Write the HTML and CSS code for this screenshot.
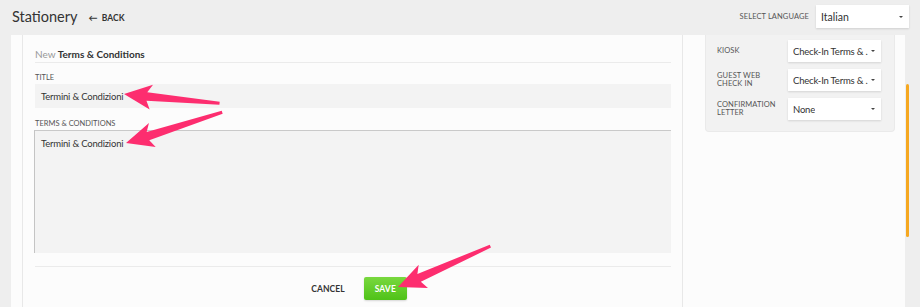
FILE: index.html
```html
<!DOCTYPE html>
<html lang="en">
<head>
<meta charset="utf-8">
<title>Stationery</title>
<link rel="stylesheet" href="styles.css">
</head>
<body>
<div class="page">
  <header class="topbar">
    <div class="title-group">
      <h1 class="page-title">Stationery</h1>
      <a class="back-link"><span class="back-arrow">&#8592;</span>BACK</a>
    </div>
    <div class="lang">
      <span class="lang-label">SELECT LANGUAGE</span>
      <div class="select lang-select"><span>Italian</span><span class="caret"></span></div>
    </div>
  </header>

  <div class="content">
    <section class="main-card">
      <div class="form-head"><span class="muted">New</span> Terms &amp; Conditions</div>
      <div class="field-label">TITLE</div>
      <div class="input">Termini &amp; Condizioni</div>
      <div class="field-label label-gap">TERMS &amp; CONDITIONS</div>
      <div class="textarea">Termini &amp; Condizioni</div>
      <div class="actions">
        <button class="btn-cancel">CANCEL</button>
        <button class="btn-save">SAVE</button>
      </div>
    </section>

    <aside class="side">
      <div class="panel">
        <div class="panel-row">
          <div class="row-label">KIOSK</div>
          <div class="select small-select"><span class="sel-text">Check-In Terms &amp; .</span><span class="caret"></span></div>
        </div>
        <div class="panel-row">
          <div class="row-label">GUEST WEB<br>CHECK IN</div>
          <div class="select small-select"><span class="sel-text">Check-In Terms &amp; .</span><span class="caret"></span></div>
        </div>
        <div class="panel-row">
          <div class="row-label">CONFIRMATION<br>LETTER</div>
          <div class="select small-select"><span class="sel-text">None</span><span class="caret"></span></div>
        </div>
      </div>
    </aside>
  </div>

  <div class="scroll-thumb"></div>

  <svg class="arrows" width="920" height="307" viewBox="0 0 920 307">
    <g fill="#fd2d6f">
      <polygon transform="translate(124,94) rotate(5.4)" points="0,0 28,-12 23,-4 96,-1.3 96,1.8 23,4.5 27,13"/>
      <polygon transform="translate(126,143) rotate(-17.9)" points="0,0 28,-12 23,-4 101,-1.3 101,1.8 23,4.5 27,13"/>
      <polygon transform="translate(398,287) rotate(-24)" points="0,0 28,-12 23,-4 101,-1.3 101,1.8 23,4.5 27,13"/>
    </g>
  </svg>
</div>
</body>
</html>
```

FILE: styles.css
```css
* { box-sizing: border-box; }

html, body {
  margin: 0;
  padding: 0;
}

body {
  background: #eeeeee;
  font-family: Lato, "Open Sans", sans-serif;
  color: #333;
  width: 920px;
  height: 307px;
  overflow: hidden;
}

.page {
  position: relative;
  width: 920px;
  height: 307px;
}

/* top bar */
.topbar {
  height: 35px;
  display: flex;
  align-items: center;
  justify-content: space-between;
  padding: 0 12px 0 12px;
}

.title-group {
  display: flex;
  align-items: center;
  gap: 11px;
}

.page-title {
  margin: 0;
  font-size: 14.5px;
  font-weight: 400;
  color: #333;
  line-height: 20px;
  position: relative;
  top: -1px;
}

.back-link {
  font-size: 8.5px;
  font-weight: 700;
  color: #333;
  display: flex;
  align-items: center;
  letter-spacing: 0.1px;
}

.back-arrow {
  font-size: 9px;
  margin-right: 4px;
}

.lang {
  display: flex;
  align-items: center;
  gap: 7px;
  margin-right: -1px;
  position: relative;
  top: -1px;
}

.lang-label {
  font-size: 7.5px;
  color: #555;
  letter-spacing: 0.1px;
}

.select {
  display: flex;
  align-items: center;
  justify-content: space-between;
  background: #fff;
  color: #333;
  box-shadow: 0 1px 2px rgba(0, 0, 0, 0.13);
  white-space: nowrap;
}

.sel-text {
  overflow: hidden;
}

.caret {
  flex: none;
  width: 0;
  height: 0;
  border-left: 2px solid transparent;
  border-right: 2px solid transparent;
  border-top: 2.5px solid #444;
}

.lang-select {
  width: 93px;
  height: 23px;
  padding: 0 6px 0 5px;
  font-size: 10.5px;
}

/* content */
.content {
  margin-left: 11px;
  width: 894px;
  height: 272px;
  background: #fcfcfc;
  display: flex;
}

.main-card {
  margin-left: 11px;
  width: 661px;
  border-left: 1px solid #e8e8e8;
  border-right: 1px solid #e8e8e8;
  padding: 0 11px 0 12px;
  display: flex;
  flex-direction: column;
}

.form-head {
  padding-top: 13px;
  padding-bottom: 2px;
  line-height: 12px;
  font-size: 10px;
  font-weight: 700;
  color: #333;
  border-bottom: 1px solid #ebebeb;
}

.muted {
  font-weight: 400;
  color: #999;
}

.field-label {
  font-size: 7.5px;
  color: #555;
  line-height: 10px;
  margin-top: 10px;
  margin-bottom: 1px;
}

.label-gap {
  margin-top: 11px;
}

.input {
  height: 24px;
  background: #f3f3f3;
  font-size: 9.5px;
  letter-spacing: -0.2px;
  display: flex;
  align-items: center;
  padding-left: 6px;
  color: #333;
}

.textarea {
  height: 123px;
  background: #f3f3f3;
  border-top: 1px solid #c9c9c9;
  border-left: 1px solid #c4c4c4;
  margin-left: -1px;
  font-size: 9.5px;
  letter-spacing: -0.2px;
  padding: 7px 6px;
  line-height: 12px;
  color: #333;
}

.actions {
  margin-top: 13px;
  border-top: 1px solid #ebebeb;
  display: flex;
  justify-content: center;
  align-items: center;
  gap: 19px;
  padding-top: 10px;
  padding-left: 12px;
}

.btn-cancel {
  border: 0;
  background: none;
  font-family: inherit;
  font-size: 8.5px;
  font-weight: 700;
  color: #333;
  padding: 0;
  letter-spacing: 0.1px;
}

.btn-save {
  border: 0;
  font-family: inherit;
  width: 43px;
  height: 23px;
  border-radius: 2px;
  background: linear-gradient(#79d83f, #4fc218);
  box-shadow: 0 1px 2px rgba(0, 0, 0, 0.15);
  color: #fff;
  font-size: 8.5px;
  font-weight: 700;
  padding: 0;
  letter-spacing: 0.1px;
}

/* side */
.side {
  flex: 1;
  padding: 0 10px 0 22px;
}

.panel {
  background: #f2f2f2;
  border: 1px solid #eaeaea;
  border-top: 0;
  border-radius: 0 0 4px 4px;
  padding: 5px 12px 11px 11px;
  display: flex;
  flex-direction: column;
  gap: 7px;
}

.panel-row {
  display: flex;
  align-items: center;
  height: 22px;
}

.row-label {
  width: 71px;
  font-size: 7.5px;
  line-height: 8.5px;
  color: #555;
  letter-spacing: 0.1px;
}

.small-select {
  width: 93px;
  height: 22px;
  padding: 0 6px 0 5px;
  font-size: 9.5px;
  letter-spacing: -0.2px;
}

.scroll-thumb {
  position: absolute;
  left: 906px;
  top: 84px;
  width: 3px;
  height: 153px;
  border-radius: 2px;
  background: #f6a821;
}

.arrows {
  position: absolute;
  left: 0;
  top: 0;
  pointer-events: none;
}
```
